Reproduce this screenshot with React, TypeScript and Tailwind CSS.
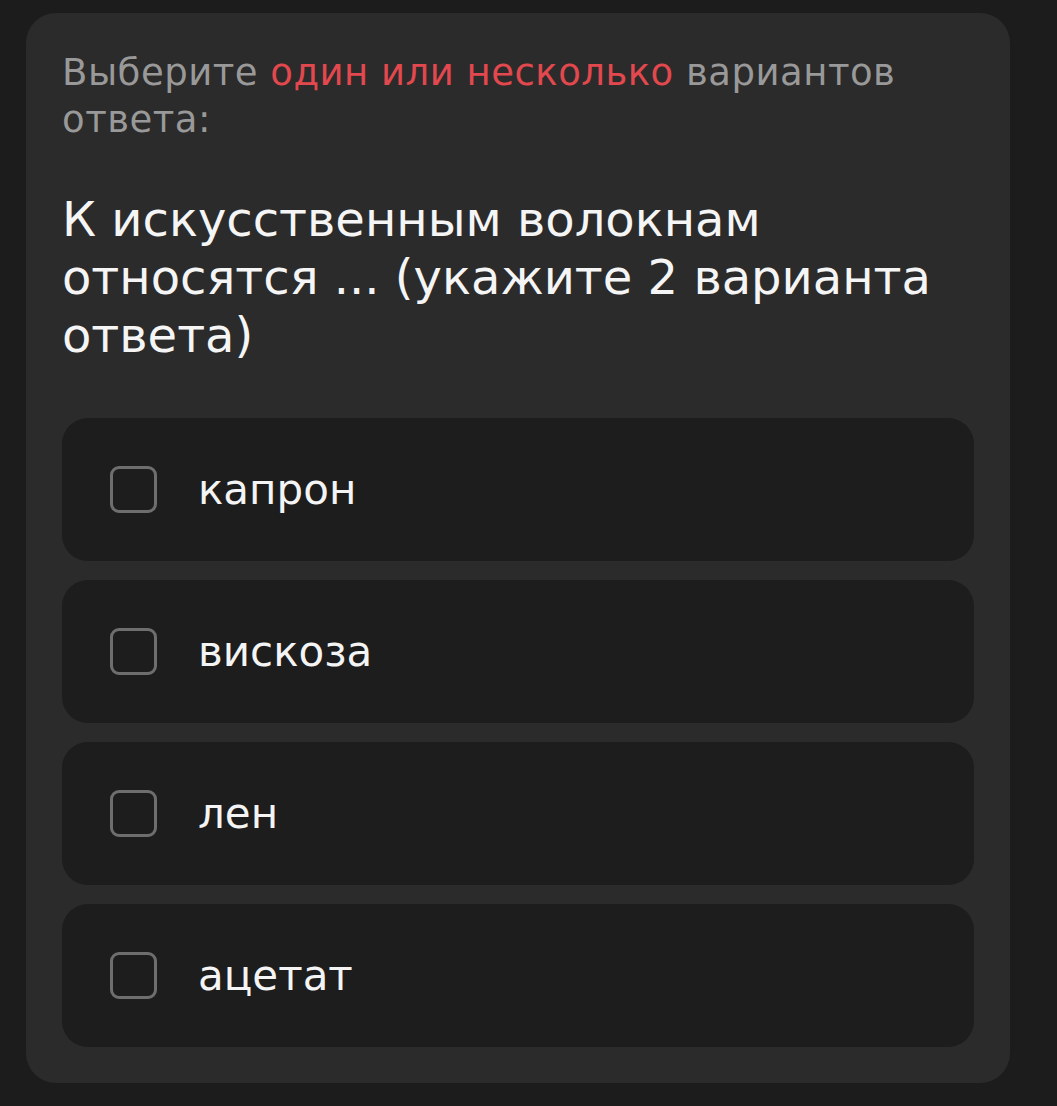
const options: string[] = ["капрон", "вискоза", "лен", "ацетат"];

function Option({ label }: { label: string }) {
  return (
    <div className="flex h-[143px] items-center rounded-[26px] bg-[#1d1d1d] pl-[48px]">
      <div className="h-[47px] w-[47px] shrink-0 rounded-[9px] border-[3px] border-[#6e6e6e]" />
      <span className="ml-[41px] text-[42px] leading-none text-[#f4f4f4]">{label}</span>
    </div>
  );
}

export default function App(): JSX.Element {
  return (
    <div
      className="min-h-[1106px] w-full bg-[#1c1c1c] pt-[13px] pl-[26px]"
      style={{ fontFamily: '"DejaVu Sans", "Noto Sans", sans-serif' }}
    >
      <div className="w-[984px] rounded-[30px] bg-[#2b2b2b] px-[36px] pt-[36px] pb-[36px]">
        <p className="text-[37px] leading-[47px] tracking-[0.5px] text-[#999999]">
          Выберите <span className="text-[#e2484e]">один или несколько</span> вариантов ответа:
        </p>
        <h1 className="mt-[47px] text-[48px] leading-[58px] text-[#f5f5f5]">
          К искусственным волокнам относятся ... (укажите 2 варианта ответа)
        </h1>
        <div className="mt-[54px] flex flex-col gap-[19px]">
          {options.map((o) => (
            <Option key={o} label={o} />
          ))}
        </div>
      </div>
    </div>
  );
}
